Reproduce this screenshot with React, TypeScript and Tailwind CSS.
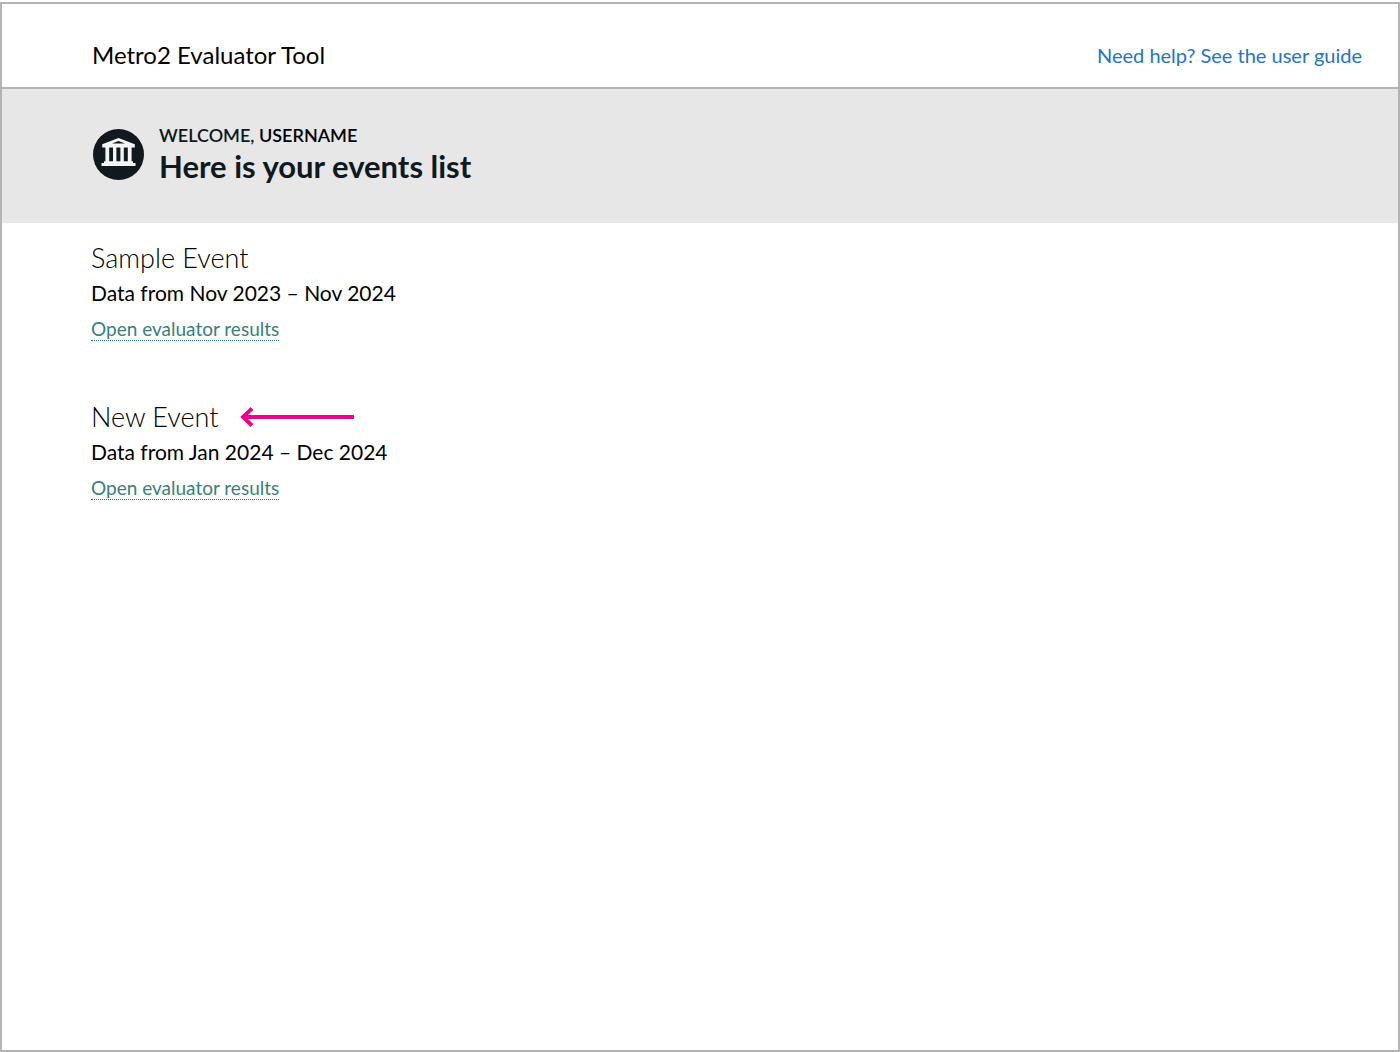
const events = [
  { name: "Sample Event", range: "Data from Nov 2023 – Nov 2024", isNew: false },
  { name: "New Event", range: "Data from Jan 2024 – Dec 2024", isNew: true },
];

function BankIcon() {
  return (
    <svg viewBox="0 0 51 51" className="size-[51px] shrink-0" aria-hidden="true">
      <circle cx="25.5" cy="25.5" r="25.5" fill="#101820" />
      <g fill="#f4f4f4">
        <path
          fillRule="evenodd"
          d="M25.5 9 L41.8 15.2 V18.4 H9.2 V15.2 Z M25.5 12 L19 14.6 H32 Z"
        />
        <path d="M12.4 18 H16.2 V33 H12.4 Z M20 18 H23.4 V33 H20 Z M27.4 18 H30.8 V33 H27.4 Z M34.8 18 H38.6 V33 H34.8 Z" />
        <path d="M11 32.3 H40 V34 H42.5 V37 H8.5 V34 H11 Z" />
      </g>
    </svg>
  );
}

function NewEventArrow() {
  return (
    <svg viewBox="0 0 114 20" className="h-5 w-[114px] shrink-0" aria-hidden="true">
      <path d="M12 1.5 L3 10 L12 18.5 M3 10 H114" fill="none" stroke="#ec008c" strokeWidth="3.8" />
    </svg>
  );
}

export default function App() {
  return (
    <div className="flex min-h-screen flex-col bg-white pt-0.5 font-['Lato',sans-serif] text-black">
      <div className="flex flex-1 flex-col border-2 border-[#b4b4b4]">
        <header className="flex items-center justify-between border-b-2 border-[#b4b4b4] pt-[35px] pr-9 pb-4 pl-[90px]">
          <p className="text-2xl">Metro2 Evaluator Tool</p>
          <a href="#guide" className="text-xl text-[#2474c6]">
            Need help? See the user guide
          </a>
        </header>
        <section className="flex items-start gap-[15px] bg-[#e7e7e7] pt-9 pr-9 pb-9 pl-[91px] text-[#101820]">
          <div className="pt-1">
            <BankIcon />
          </div>
          <div>
            <p className="text-lg leading-5 font-semibold">
              WELCOME, <span className="text-black">USERNAME</span>
            </p>
            <h1 className="text-[31px] leading-[42px] font-bold">Here is your events list</h1>
          </div>
        </section>
        <main className="flex flex-col gap-[58px] pt-[17px] pr-9 pl-[89px]">
          {events.map((event) => (
            <article key={event.name} className="flex flex-col items-start">
              <div className="flex items-center gap-[22px]">
                <h2 className="text-[27px] leading-9 font-light">{event.name}</h2>
                {event.isNew && <NewEventArrow />}
              </div>
              <p className="text-[21px] leading-[34px]">{event.range}</p>
              <a
                href="#results"
                className="mt-2 border-b border-dotted border-[#257675] text-[19px] leading-[22px] text-[#398079]"
              >
                Open evaluator results
              </a>
            </article>
          ))}
        </main>
      </div>
    </div>
  );
}
